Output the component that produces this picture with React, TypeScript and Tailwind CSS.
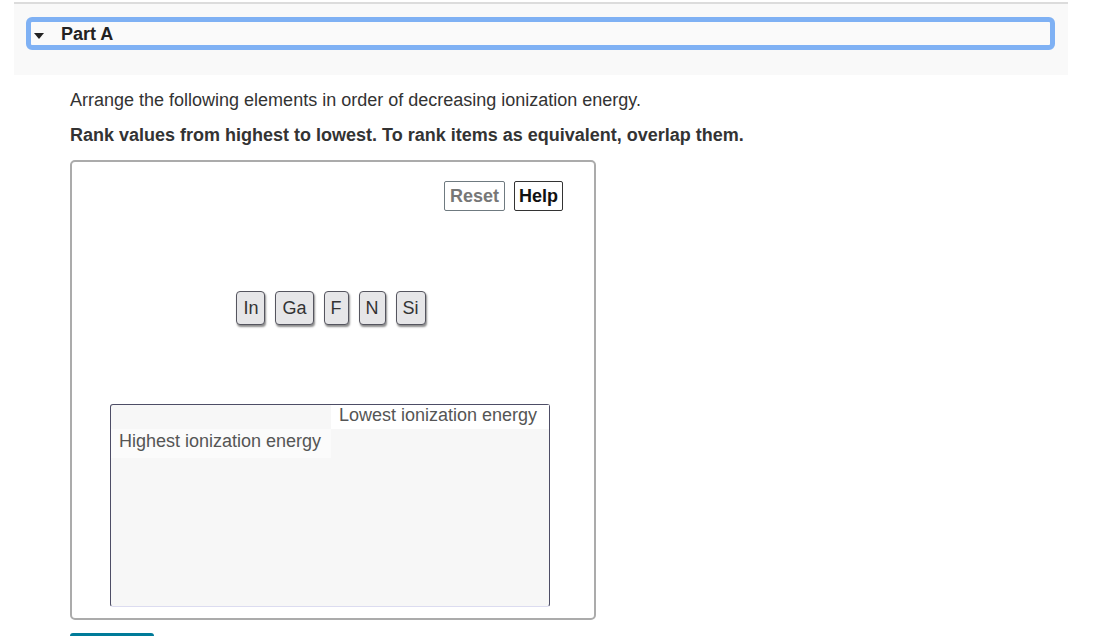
import React from "react";

const tiles = ["In", "Ga", "F", "N", "Si"];

export default function App() {
  return (
    <div className="w-[1120px] h-[636px] overflow-hidden bg-white text-[#333]" style={{ fontFamily: '"Liberation Sans", Arial, sans-serif' }}>
      <div className="ml-[14px] w-[1054px] mt-[2px] border-t-[2px] border-[#dcdcdc] bg-[#f9f9f9] h-[73px] pt-[13px] pl-[12px] pr-[13px]">
        <div className="h-[33px] border-[5px] border-[#7fb1f4] rounded-[6px] bg-[#fafafa] flex items-center">
          <svg width="10" height="6" viewBox="0 0 10 6" className="ml-[3px] mt-[4px]">
            <polygon points="0,0 10,0 5,6" fill="#222" />
          </svg>
          <span className="ml-[17px] font-bold text-[18px] text-[#222] leading-none">Part A</span>
        </div>
      </div>
      <div className="pl-[70px]">
        <p className="mt-[15px] text-[18px] leading-[21px] text-[#333]">Arrange the following elements in order of decreasing ionization energy.</p>
        <p className="mt-[14px] text-[18px] leading-[21px] font-bold text-[#333]">Rank values from highest to lowest. To rank items as equivalent, overlap them.</p>
        <div className="mt-[14px] w-[526px] h-[460px] border-[2px] border-[#ababab] rounded-[5px] bg-white flex flex-col">
          <div className="flex justify-end gap-[9px] pr-[31px] pt-[19px]">
            <div className="h-[30px] px-[5px] border-[1.5px] border-[#6f7a80] rounded-[2px] flex items-center font-bold text-[18px] text-[#777]">Reset</div>
            <div className="h-[30px] px-[4px] border-[1.5px] border-[#333] rounded-[2px] flex items-center font-bold text-[18px] text-[#111]">Help</div>
          </div>
          <div className="flex justify-center gap-[10px] mt-[80px] pr-[4px]">
            {tiles.map((t) => (
              <div key={t} className="h-[34px] px-[6px] bg-[#e6e6e8] border border-[#55555f] rounded-[4px] shadow-[1px_2px_2px_rgba(0,0,0,0.45)] flex items-center text-[18px] text-[#333]">
                {t}
              </div>
            ))}
          </div>
          <div className="mt-[79px] ml-[38px] w-[440px] h-[203px] border border-[#4d4d66] border-b-[#dcdcf0] rounded-[3px] bg-[#f7f7f7] flex flex-col">
            <div className="flex">
              <div className="w-[220px]" />
              <div className="flex-1 h-[24px] bg-white text-[18px] text-[#555] leading-[21px] pl-[8px]">Lowest ionization energy</div>
            </div>
            <div className="flex">
              <div className="w-[220px] h-[29px] bg-[#fbfbfb] text-[18px] text-[#555] leading-[21px] pl-[8px] pt-[2px]">Highest ionization energy</div>
            </div>
          </div>
        </div>
        <div className="mt-[13px] w-[84px] h-[10px] bg-[#007b99] rounded-t-[3px]" />
      </div>
    </div>
  );
}
